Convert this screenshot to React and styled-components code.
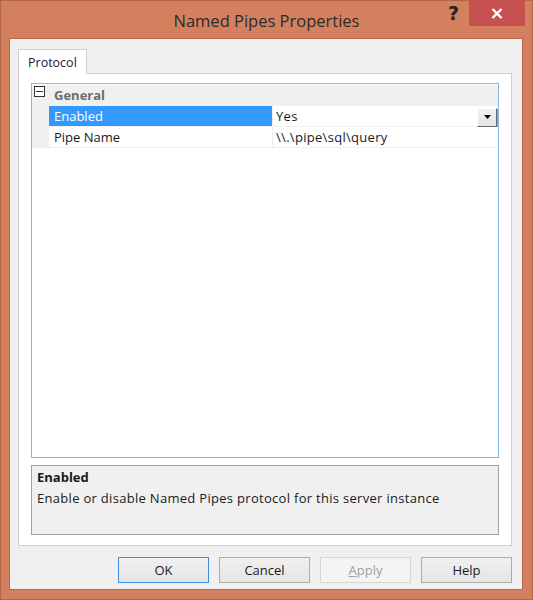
import styled, { createGlobalStyle } from "styled-components";

const Global = createGlobalStyle`
  html, body { margin: 0; padding: 0; }
  body { font-family: "Open Sans", "Noto Sans", "DejaVu Sans", sans-serif; }
`;

const Frame = styled.div`
  width: 533px;
  height: 600px;
  box-sizing: border-box;
  background: #d4805f;
  border: 1px solid #b0674c;
  display: flex;
  flex-direction: column;
`;

const TitleBar = styled.div`
  height: 37px;
  position: relative;
  display: flex;
  align-items: center;
  justify-content: center;
`;

const Title = styled.div`
  font-size: 16.5px;
  color: #2b2b2b;
  margin-top: 1px;
`;

const HelpGlyph = styled.div`
  position: absolute;
  left: 447px;
  top: 1px;
  font-size: 19px;
  font-weight: 700;
  color: #222;
  font-family: "DejaVu Sans", sans-serif;
`;

const CloseBtn = styled.div`
  position: absolute;
  left: 468px;
  top: -1px;
  width: 56px;
  height: 26px;
  background: #c75050;
  display: flex;
  align-items: center;
  justify-content: center;
`;

const Client = styled.div`
  flex: 1;
  margin: 0 9px 9px 8px;
  background: #f0f0f0;
  border: 1px solid #b8694d;
  box-sizing: border-box;
  padding: 10px 10px 6px 8px;
  display: flex;
  flex-direction: column;
`;

const TabStrip = styled.div`
  display: flex;
  height: 24px;
  position: relative;
  z-index: 1;
`;

const Tab = styled.div`
  width: 69px;
  box-sizing: border-box;
  background: #fff;
  border: 1px solid #d0d0d0;
  border-bottom: none;
  font-size: 12.5px;
  color: #1a1a3a;
  padding: 4px 0 0 9px;
  height: 25px;
`;

const TabPanel = styled.div`
  height: 473px;
  box-sizing: border-box;
  background: #fff;
  border: 1px solid #d0d0d0;
  padding: 9px 12px 10px 12px;
  display: flex;
  flex-direction: column;
  gap: 7px;
`;

const Grid = styled.div`
  flex: 1;
  border: 1px solid #8ab8e6;
  background: #fff;
  padding-top: 1px;
  display: flex;
  flex-direction: column;
`;

const Row = styled.div`
  display: flex;
  height: 20px;
  border-bottom: 1px solid #f0f0f0;
  background: ${({ $category }) => ($category ? "#f0f0f0" : "#fff")};
  font-size: 13px;
  line-height: 20px;
`;

const Margin = styled.div`
  width: 17px;
  background: #f0f0f0;
  display: flex;
  align-items: flex-start;
  justify-content: center;
  padding-top: 1px;
  box-sizing: border-box;
`;

const Expander = styled.div`
  width: 9px;
  height: 9px;
  border: 1px solid #333;
  background: #fff;
  position: relative;
  margin-left: -2px;
  &::after {
    content: "";
    position: absolute;
    left: 1px;
    right: 1px;
    top: 4px;
    height: 1px;
    background: #333;
  }
`;

const CategoryLabel = styled.div`
  font-weight: 700;
  color: #6d6d6d;
  padding-left: 5px;
`;

const Label = styled.div`
  width: 224px;
  box-sizing: border-box;
  padding-left: 5px;
  color: ${({ $selected }) => ($selected ? "#fff" : "#1a1a1a")};
  background: ${({ $selected }) => ($selected ? "#3399ff" : "#fff")};
  border-right: 1px solid #f0f0f0;
`;

const Value = styled.div`
  flex: 1;
  padding-left: 3px;
  color: #1a1a1a;
  letter-spacing: 0.3px;
  display: flex;
  justify-content: space-between;
  align-items: center;
`;

const DropBtn = styled.div`
  width: 20px;
  height: 19px;
  margin: 2px 1px 0 0;
  box-sizing: border-box;
  background: linear-gradient(#f2f2f2, #e3e3e3);
  border: 1px solid #fff;
  border-right-color: #696969;
  border-bottom-color: #696969;
  display: flex;
  align-items: center;
  justify-content: center;
  box-shadow: 1px 1px 0 #a0a0a0;
`;

const Desc = styled.div`
  height: 70px;
  box-sizing: border-box;
  background: #f0f0f0;
  border: 1px solid #a0a0a0;
  padding: 1px 5px;
  font-size: 13px;
  color: #1a1a1a;
  line-height: 21px;
`;

const DescTitle = styled.div`
  font-weight: 700;
`;

const DescText = styled.div`
  letter-spacing: 0.3px;
`;

const Buttons = styled.div`
  margin-top: auto;
  display: flex;
  justify-content: flex-end;
  gap: 10px;
`;

const Button = styled.div`
  width: 91px;
  height: 26px;
  box-sizing: border-box;
  border: 1px solid ${({ $default, $disabled }) => ($default ? "#3c8fdc" : $disabled ? "#d5d5d5" : "#acacac")};
  background: ${({ $disabled }) => ($disabled ? "#f4f4f4" : "linear-gradient(#f0f0f0, #e5e5e5)")};
  color: ${({ $disabled }) => ($disabled ? "#a0a0a0" : "#1a1a1a")};
  font-size: 13px;
  display: flex;
  align-items: center;
  justify-content: center;
  u { text-decoration: underline; }
`;

export default function App() {
  return (
    <>
      <Global />
      <Frame>
        <TitleBar>
          <Title>Named Pipes Properties</Title>
          <HelpGlyph>?</HelpGlyph>
          <CloseBtn>
            <svg width="12" height="11" viewBox="0 0 12 11">
              <path d="M1.5 1 L10.5 10 M10.5 1 L1.5 10" stroke="#fff" strokeWidth="2.4" />
            </svg>
          </CloseBtn>
        </TitleBar>
        <Client>
          <TabStrip>
            <Tab>Protocol</Tab>
          </TabStrip>
          <TabPanel>
            <Grid>
              <Row $category>
                <Margin>
                  <Expander />
                </Margin>
                <CategoryLabel>General</CategoryLabel>
              </Row>
              <Row>
                <Margin />
                <Label $selected>Enabled</Label>
                <Value>
                  Yes
                  <DropBtn>
                    <svg width="7" height="4" viewBox="0 0 7 4">
                      <path d="M0 0 H7 L3.5 4 Z" fill="#000" />
                    </svg>
                  </DropBtn>
                </Value>
              </Row>
              <Row>
                <Margin />
                <Label>Pipe Name</Label>
                <Value>\\.\pipe\sql\query</Value>
              </Row>
            </Grid>
            <Desc>
              <DescTitle>Enabled</DescTitle>
              <DescText>Enable or disable Named Pipes protocol for this server instance</DescText>
            </Desc>
          </TabPanel>
          <Buttons>
            <Button $default>OK</Button>
            <Button>Cancel</Button>
            <Button $disabled>
              <span><u>A</u>pply</span>
            </Button>
            <Button>Help</Button>
          </Buttons>
        </Client>
      </Frame>
    </>
  );
}
